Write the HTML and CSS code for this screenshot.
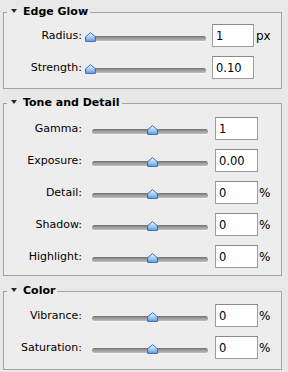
FILE: index.html
```html
<!DOCTYPE html>
<html>
<head>
<meta charset="utf-8">
<link rel="stylesheet" href="styles.css">
</head>
<body>

<fieldset class="group glow">
  <legend><span class="arrow"></span>Edge Glow</legend>
  <div class="rows">
    <div class="row">
      <label>Radius:</label>
      <div class="slider"><div class="track"></div><svg class="thumb" style="left:0px" width="11" height="10" viewBox="0 0 11 10"><use href="#knob"/></svg></div>
      <input class="num" type="text" value="1"><span class="unit">px</span>
    </div>
    <div class="row">
      <label>Strength:</label>
      <div class="slider"><div class="track"></div><svg class="thumb" style="left:0px" width="11" height="10" viewBox="0 0 11 10"><use href="#knob"/></svg></div>
      <input class="num" type="text" value="0.10">
    </div>
  </div>
</fieldset>

<fieldset class="group tone">
  <legend><span class="arrow"></span>Tone and Detail</legend>
  <div class="rows">
    <div class="row">
      <label>Gamma:</label>
      <div class="slider"><div class="track"></div><svg class="thumb" style="left:55px" width="11" height="10" viewBox="0 0 11 10"><use href="#knob"/></svg></div>
      <input class="num" type="text" value="1">
    </div>
    <div class="row">
      <label>Exposure:</label>
      <div class="slider"><div class="track"></div><svg class="thumb" style="left:55px" width="11" height="10" viewBox="0 0 11 10"><use href="#knob"/></svg></div>
      <input class="num" type="text" value="0.00">
    </div>
    <div class="row">
      <label>Detail:</label>
      <div class="slider"><div class="track"></div><svg class="thumb" style="left:55px" width="11" height="10" viewBox="0 0 11 10"><use href="#knob"/></svg></div>
      <input class="num" type="text" value="0"><span class="unit">%</span>
    </div>
    <div class="row">
      <label>Shadow:</label>
      <div class="slider"><div class="track"></div><svg class="thumb" style="left:55px" width="11" height="10" viewBox="0 0 11 10"><use href="#knob"/></svg></div>
      <input class="num" type="text" value="0"><span class="unit">%</span>
    </div>
    <div class="row">
      <label>Highlight:</label>
      <div class="slider"><div class="track"></div><svg class="thumb" style="left:55px" width="11" height="10" viewBox="0 0 11 10"><use href="#knob"/></svg></div>
      <input class="num" type="text" value="0"><span class="unit">%</span>
    </div>
  </div>
</fieldset>

<fieldset class="group color">
  <legend><span class="arrow"></span>Color</legend>
  <div class="rows">
    <div class="row">
      <label>Vibrance:</label>
      <div class="slider"><div class="track"></div><svg class="thumb" style="left:55px" width="11" height="10" viewBox="0 0 11 10"><use href="#knob"/></svg></div>
      <input class="num" type="text" value="0"><span class="unit">%</span>
    </div>
    <div class="row">
      <label>Saturation:</label>
      <div class="slider"><div class="track"></div><svg class="thumb" style="left:55px" width="11" height="10" viewBox="0 0 11 10"><use href="#knob"/></svg></div>
      <input class="num" type="text" value="0"><span class="unit">%</span>
    </div>
  </div>
</fieldset>

<svg width="0" height="0" class="defs">
  <defs>
    <linearGradient id="knobfill" x1="0" y1="0" x2="0" y2="1">
      <stop offset="0" stop-color="#eef6fe"/>
      <stop offset="0.5" stop-color="#a9d0f5"/>
      <stop offset="1" stop-color="#5d9fe4"/>
    </linearGradient>
    <path id="knob" d="M5.5 0.6 L10.4 4.8 V9.4 H0.6 V4.8 Z" fill="url(#knobfill)" stroke="#3b6aa6" stroke-width="1" stroke-linejoin="round"/>
  </defs>
</svg>

</body>
</html>
```

FILE: styles.css
```css
body {
	margin: 0;
	background: #e8e8e8;
	font-family: "DejaVu Sans", Verdana, sans-serif;
	font-size: 11px;
	color: #000;
}
.defs {
	position: absolute;
}
.group {
	width: 279px;
	box-sizing: border-box;
	margin: 5px 0 0 3px;
	padding: 6px 0 8px 0;
	border: 1px solid #a3a3a3;
	background: #ededed;
	min-width: 0;
}
.group + .group {
	margin-top: 7px;
}
.glow { padding-top: 5px; padding-bottom: 9px; }
.tone { padding-top: 7px; padding-bottom: 7px; }
.color { margin-top: 8px !important; padding-bottom: 10px; }
.group legend {
	margin-left: 3px;
	padding: 0 2px 0 4px;
	font-weight: bold;
	font-size: 11px;
	line-height: 14px;
	height: 14px;
	color: #000;
}
.arrow {
	display: inline-block;
	width: 0;
	height: 0;
	border-left: 3px solid transparent;
	border-right: 3px solid transparent;
	border-top: 4px solid #2a2a2a;
	margin-right: 6px;
	vertical-align: 2px;
}
.rows {
	display: flex;
	flex-direction: column;
	gap: 9px;
}
.row {
	display: flex;
	align-items: center;
	height: 23px;
}
.row label {
	width: 78px;
	text-align: right;
}
.slider {
	position: relative;
	height: 23px;
}
.track {
	position: absolute;
	left: 0;
	right: 0;
	top: 12px;
	height: 5px;
	border-radius: 3px;
	background: linear-gradient(#6f6f6f, #9c9c9c 45%, #bcbcbc);
	box-shadow: 0 1px 0 rgba(255,255,255,0.6);
}
.thumb {
	position: absolute;
	top: 8px;
	display: block;
}
.num {
	box-sizing: border-box;
	height: 23px;
	margin: 0;
	padding: 1px 3px 0;
	border: 1px solid #9d9d9d;
	border-top-color: #8a8a8a;
	background: #fff;
	font-family: "DejaVu Sans", Verdana, sans-serif;
	font-size: 11.5px;
	color: #000;
	outline: none;
}
.unit {
	margin-left: 2px;
	font-size: 12px;
}
.glow .slider { margin-left: 3px; width: 121px; }
.glow .num { margin-left: 6px; width: 42px; }
.tone .slider, .color .slider { margin-left: 10px; width: 116px; }
.tone .num, .color .num { margin-left: 7px; width: 43px; }
.tone .unit, .color .unit { margin-left: 1px; }
```
